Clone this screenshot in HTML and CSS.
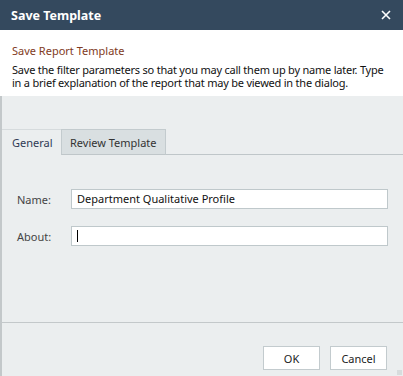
FILE: index.html
```html
<!DOCTYPE HTML>
<html lang="en">
  <head>
    <title>Save Template</title>
    <meta charset="utf-8">
    <link rel="stylesheet" href="styles.css">
  </head>
  <body>

  <div class="dialog">
    <div class="titlebar">
      <span class="title">Save Template</span>
      <svg class="close" width="10" height="10" viewBox="0 0 10 10">
        <path d="M1 1L9 9M9 1L1 9" stroke="#ffffff" stroke-width="1.6"/>
      </svg>
    </div>

    <div class="header">
      <div class="subtitle">Save Report Template</div>
      <div class="desc">Save the filter parameters so that you may call them up by name later. Type in a brief explanation of the report that may be viewed in the dialog.</div>
    </div>

    <div class="body">
      <div class="tabs">
        <span class="tab active">General</span>
        <span class="tab">Review Template</span>
        <span class="tabfill"></span>
      </div>

      <div class="panel">
        <div class="row">
          <label>Name:</label>
          <div class="field">Department Qualitative Profile</div>
        </div>
        <div class="row">
          <label>About:</label>
          <div class="field"><span class="caret"></span></div>
        </div>
      </div>

      <div class="footer">
        <button class="btn">OK</button>
        <button class="btn">Cancel</button>
      </div>
      <div class="grip"></div>
    </div>
  </div>

  </body>
</html>
```

FILE: styles.css
```css
html, body {
  margin: 0;
  padding: 0;
  height: 100%;
}
body {
  font-family: "Noto Sans", "Open Sans", sans-serif;
  font-size: 11px;
  color: #222;
}

.dialog {
  width: 403px;
  height: 376px;
  display: flex;
  flex-direction: column;
  overflow: hidden;
}

.titlebar {
  height: 30px;
  background: #34495e;
  display: flex;
  align-items: center;
  justify-content: space-between;
  padding: 0 12px 0 11px;
}
.title {
  color: #fff;
  font-weight: bold;
  font-size: 12.5px;
}
.close {
  display: block;
}

.header {
  height: 66px;
  box-sizing: border-box;
  background: #fff;
  padding: 13px 8px 0 12px;
}
.subtitle {
  color: #7f3a23;
  line-height: 15px;
  margin-bottom: 5px;
}
.desc {
  color: #111;
  line-height: 13px;
  letter-spacing: -0.22px;
}

.body {
  flex: 1;
  background: #ebeeef;
  border-left: 2px solid #c3c8ca;
  position: relative;
  display: flex;
  flex-direction: column;
}

.tabs {
  margin-top: 33px;
  display: flex;
  height: 26px;
  box-sizing: border-box;
}
.tab {
  box-sizing: border-box;
  height: 26px;
  line-height: 25px;
  padding: 0 8px;
  color: #333;
  background: #d9dfe1;
  border: 1px solid #c3cbce;
  border-bottom: 1px solid #bfc6c9;
}
.tab.active {
  width: 59px;
  background: #ebeeef;
  border: none;
  border-top: 1px solid #d6dbdd;
  color: #2f3a55;
  padding-left: 10px;
}
.tabfill {
  flex: 1;
  border-bottom: 1px solid #bfc6c9;
}

.panel {
  height: 168px;
  box-sizing: border-box;
  border-bottom: 1px solid #c3c8ca;
  padding-top: 34px;
}
.row {
  display: flex;
  align-items: center;
  height: 20px;
  margin-bottom: 17px;
}
.row label {
  width: 54px;
  padding-left: 15px;
  color: #444;
}
.field {
  box-sizing: border-box;
  width: 317px;
  height: 20px;
  background: #fff;
  border: 1px solid #bfc8cb;
  padding: 0 5px;
  line-height: 18px;
  color: #111;
  display: flex;
  align-items: center;
}
.caret {
  width: 1px;
  height: 12px;
  background: #000;
}

.footer {
  display: flex;
  justify-content: flex-end;
  gap: 10px;
  padding: 23px 16px 0 0;
}
.btn {
  width: 57px;
  height: 24px;
  background: #fff;
  border: 1px solid #c3cbce;
  font-family: "Noto Sans", "Open Sans", sans-serif;
  font-size: 11px;
  color: #222;
  padding: 0;
}

.grip {
  position: absolute;
  right: 1px;
  bottom: 1px;
  width: 5px;
  height: 5px;
  background: radial-gradient(circle, #c0c6c8 0.6px, transparent 0.8px) 0 0 / 2px 2px;
}
```
